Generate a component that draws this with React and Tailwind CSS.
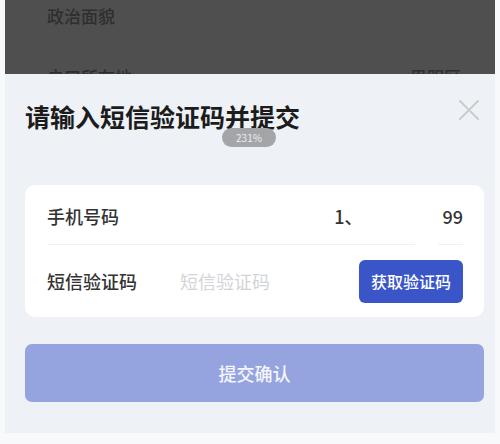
import React from "react";

export default function App() {
  const font = { fontFamily: '"Noto Sans CJK SC", "Noto Sans", sans-serif' };
  return (
    <div
      className="relative w-[500px] h-[444px] bg-[#f8f9fb] pl-[5px] pr-[5px] flex flex-col overflow-hidden"
      style={font}
    >
      {/* dimmed background page */}
      <div className="h-[74px] bg-[#4f4f4f] flex flex-col pl-[42px] pr-[34px] overflow-hidden">
        <div className="h-[32px] shrink-0 flex items-center text-[17px] font-medium text-[#2e2e2e]">政治面貌</div>
        <div className="mt-[36px] shrink-0 flex items-start justify-between text-[17px] font-medium text-[#2e2e2e] leading-none">
          <span>户口所在地</span>
          <span>思明区</span>
        </div>
      </div>

      {/* bottom sheet */}
      <div className="h-[359px] bg-[#eef1f5] pl-[20px] pr-[11px] pt-[26px] flex flex-col">
        <div className="h-[32px] flex items-center justify-between">
          <span className="text-[25px] font-bold text-[#1c1c1c] leading-none">
            请输入短信验证码并提交
          </span>
          <svg width="22" height="22" viewBox="0 0 22 22" className="mr-[4px] mt-[-12px]">
            <path d="M2 2 L20 20 M20 2 L2 20" stroke="#c9cbcf" strokeWidth="1.8" strokeLinecap="round" />
          </svg>
        </div>

        <div className="mt-[53px] bg-white rounded-[10px] pl-[22px] pr-[21px] flex flex-col">
          <div className="h-[59px] flex items-center justify-between pt-[3px]">
            <span className="text-[18px] font-medium text-[#333]">手机号码</span>
            <span className="flex items-center text-[18px] font-medium text-[#333]">
              <span>1、</span>
              <span className="w-[80px]" />
              <span>99</span>
            </span>
          </div>
          <div className="flex h-px">
            <div className="w-[368px] bg-[#f0f0f0]" />
            <div className="w-[23px]" />
            <div className="flex-1 bg-[#f0f0f0]" />
          </div>
          <div className="h-[72px] flex items-center">
            <span className="w-[133px] text-[18px] font-medium text-[#333]">短信验证码</span>
            <span className="flex-1 text-[18px] text-[#d2d4d8]">短信验证码</span>
            <button className="w-[104px] h-[43px] rounded-[6px] bg-[#3a55c8] text-white text-[16px] font-medium flex items-center justify-center">
              获取验证码
            </button>
          </div>
        </div>

        <button className="mt-[27px] h-[58px] rounded-[7px] bg-[#95a4de] text-[18px] font-medium text-white/90 flex items-center justify-center">
          提交确认
        </button>
      </div>

      {/* zoom indicator */}
      <div className="absolute left-[222px] top-[128px] w-[54px] h-[19px] rounded-full bg-[#a3a5a8] text-[10px] text-white/80 flex items-center justify-center">
        231%
      </div>
    </div>
  );
}
